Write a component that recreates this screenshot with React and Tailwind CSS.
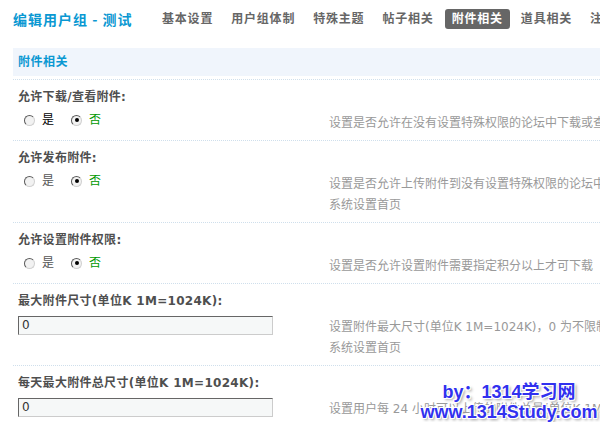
const navItems = ["基本设置", "用户组体制", "特殊主题", "帖子相关", "附件相关", "道具相关", "注册相关"];

const Radio = ({ checked }) => (
  <span className="relative inline-block w-[11px] h-[11px] rounded-full border border-t-[#5a5a5a] border-l-[#5a5a5a] border-b-[#d0d0d0] border-r-[#d0d0d0] bg-[#f2f2f2] shrink-0">
    {checked && <span className="absolute left-[2.5px] top-[2.5px] w-[4px] h-[4px] rounded-full bg-black"></span>}
  </span>
);

const RadioPair = ({ dark }) => (
  <div className="flex items-center h-[20px] pl-[6px]">
    <Radio />
    <span className={"ml-[7px] " + (dark ? "text-black" : "text-[#555]")}>是</span>
    <span className="ml-[17px] flex">
      <Radio checked />
    </span>
    <span className="ml-[7px] text-[#009900]">否</span>
  </div>
);

const TextBox = () => (
  <div className="w-[255px] h-[19px] border border-t-[#666] border-l-[#666] border-b-[#ccc] border-r-[#ccc] bg-[#f6f8f8] pl-[3px] text-[12px] leading-[17px] text-[#333]">
    0
  </div>
);

const Row = ({ label, control, lines, tall }) => (
  <div className="border-t border-dotted border-[#cfdfec] px-[5px] pb-[6px]">
    <div className="pt-[7px] leading-[20px] font-bold text-[#4f4f4f] tracking-[0.3px]">{label}</div>
    <div className="flex">
      <div className={"w-[311px] shrink-0 " + (tall ? "pt-[5px]" : "pt-[3px]")}>{control}</div>
      <div className="pt-[6px] leading-[21px] text-[#999] whitespace-nowrap">
        {lines.map((l) => (
          <div key={l}>{l}</div>
        ))}
      </div>
    </div>
  </div>
);

export default function App() {
  return (
    <div className="relative w-[600px] h-[422px] overflow-hidden bg-white text-[12px] font-['DejaVu_Sans','Noto_Sans_CJK_SC',sans-serif]">
      <div className="pl-[13px] w-[760px]">
        <div className="flex items-center h-[20px] mt-[9px]">
          <div className="w-[142px] shrink-0 text-[14px] font-bold tracking-[1px] text-[#0a98d2] font-['Noto_Sans_CJK_SC',sans-serif] whitespace-pre">
            编辑用户组 - 测试
          </div>
          <div className="flex gap-[4px]">
            {navItems.map((n) => (
              <span
                key={n}
                className={
                  "px-[7px] h-[20px] leading-[20px] rounded-[3px] font-bold tracking-[0.8px] whitespace-nowrap " +
                  (n === "附件相关" ? "bg-[#666] text-white" : "text-[#666]")
                }
              >
                {n}
              </span>
            ))}
          </div>
        </div>

        <div className="mt-[19px] h-[28px] bg-[#f0f5fc] pl-[5px] flex items-center font-bold tracking-[0.5px] text-[#0a98d2]">
          附件相关
        </div>

        <div className="mt-[3px]">
          <Row
            label="允许下载/查看附件:"
            control={<RadioPair dark />}
            lines={["设置是否允许在没有设置特殊权限的论坛中下载或查看附件"]}
          />
          <Row
            label="允许发布附件:"
            control={<RadioPair />}
            lines={["设置是否允许上传附件到没有设置特殊权限的论坛中。需要 PHP 设置支持，请参考", "系统设置首页"]}
          />
          <Row
            label="允许设置附件权限:"
            control={<RadioPair />}
            lines={["设置是否允许设置附件需要指定积分以上才可下载"]}
          />
          <Row
            label="最大附件尺寸(单位K 1M=1024K):"
            control={<TextBox />}
            tall
            lines={["设置附件最大尺寸(单位K 1M=1024K)，0 为不限制，需要 PHP 设置支持，请参考", "系统设置首页"]}
          />
          <Row
            label="每天最大附件总尺寸(单位K 1M=1024K):"
            control={<TextBox />}
            tall
            lines={["设置用户每 24 小时可以上传的附件总量(单位K 1M=1024K)，0 为不限制"]}
          />
        </div>
      </div>

      <div className="absolute left-[418px] top-[382px] w-[182px] text-center text-[18px] leading-[20px] font-bold text-[#3131ef] font-['Liberation_Sans','Noto_Sans_CJK_SC',sans-serif] whitespace-nowrap [text-shadow:1px_1px_0_#fff,-1px_-1px_0_#fff,1px_-1px_0_#fff,-1px_1px_0_#fff,2px_2px_3px_#999]">
        <div>by：1314学习网</div>
        <div>www.1314Study.com</div>
      </div>
    </div>
  );
}
